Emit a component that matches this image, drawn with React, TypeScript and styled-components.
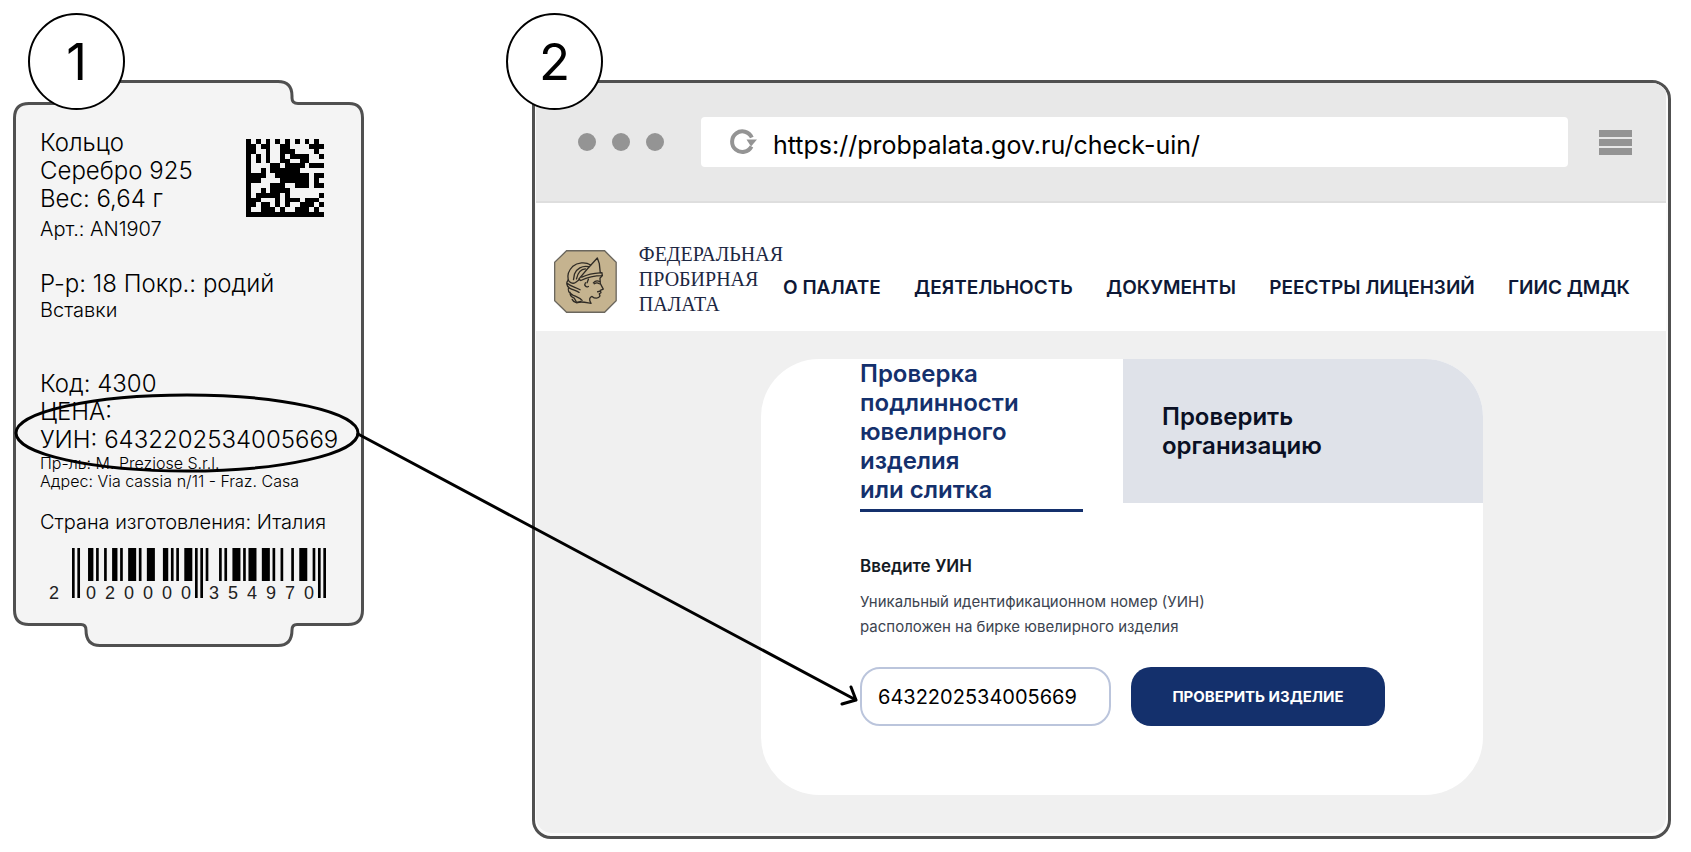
import React from 'react';
import styled, { createGlobalStyle } from 'styled-components';

const GlobalStyle = createGlobalStyle`
  *, *::before, *::after { box-sizing: border-box; }
  body { margin: 0; background: #ffffff; }
  p, h1, h2 { margin: 0; font-weight: inherit; font-size: inherit; }
`;

const outline = '#505050';
const navy = '#14306c';
const sans = "Inter, 'Liberation Sans', sans-serif";

const Page = styled.main`
  position: relative;
  display: flex;
  align-items: flex-start;
  min-width: 1500px;
  padding: 80px 20px 13px 13px;
  font-family: ${sans};
  color: #000000;
`;

const Step = styled.section`
  position: relative;
  min-width: 0;
`;

const TagStep = styled(Step)`
  flex: none;
  width: 351px;
  margin-right: 168px;
`;

const SiteStep = styled(Step)`
  flex: 1;
`;

const StepNumber = styled.div<{ $left: number }>`
  position: absolute;
  z-index: 1;
  top: -67px;
  left: ${({ $left }) => $left}px;
  display: flex;
  align-items: center;
  justify-content: center;
  width: 97px;
  height: 97px;
  border: 2px solid #000000;
  border-radius: 50%;
  background: #ffffff;
  font-size: 51px;
  line-height: 60px;
`;

/* Jewellery tag */

const TagShape = styled.svg`
  position: absolute;
  top: 0;
  left: 0;
`;

const TagBody = styled.div`
  position: relative;
  display: flex;
  flex-direction: column;
  padding: 49px 20px 48px 27px;
  font-weight: 350;
`;

const TagTop = styled.div`
  display: flex;
  justify-content: space-between;
  padding-right: 20px;
`;

const MatrixCode = styled.svg`
  flex: none;
  margin-top: 10px;
`;

const TagGroup = styled.div<{ $gap?: number }>`
  margin-top: ${({ $gap = 0 }) => $gap}px;
  white-space: nowrap;
`;

const Line = styled.p`
  font-size: 24px;
  line-height: 28px;
`;

const MidLine = styled.p`
  font-size: 20px;
  line-height: 24px;
`;

const SmallLine = styled.p`
  font-size: 16px;
  line-height: 18px;
`;

const Article = styled(MidLine)`
  margin-top: 4px;
`;

const BarcodeSvg = styled.svg`
  display: block;
  margin-top: 14px;
`;

/* Browser window */

const Window = styled.div`
  display: flex;
  flex-direction: column;
  overflow: hidden;
  padding: 0 2px 3px 1px;
  border: 3px solid ${outline};
  border-radius: 19px;
  background: #fbfbfb;
`;

const Chrome = styled.div`
  display: flex;
  align-items: center;
  height: 120px;
  padding: 0 34px 0 42px;
  border-bottom: 2px solid #dedede;
  background: #e8e8e8;
`;

const Dots = styled.div`
  display: flex;
  gap: 16px;
  margin-right: 37px;
`;

const Dot = styled.span`
  width: 18px;
  height: 18px;
  border-radius: 50%;
  background: #949494;
`;

const AddressBar = styled.label`
  display: flex;
  flex: 1;
  align-items: center;
  height: 50px;
  padding: 0 28px;
  border-radius: 4px;
  background: #ffffff;
`;

const Address = styled.input`
  flex: 1;
  min-width: 0;
  height: 32px;
  margin: 5px 0 0 14px;
  padding: 0;
  border: 0;
  outline: 0;
  background: none;
  font: 25px ${sans};
  color: #000000;
`;

const MenuButton = styled.button`
  display: flex;
  flex-direction: column;
  gap: 2px;
  margin-left: 31px;
  padding: 0;
  border: 0;
  background: none;
`;

const MenuBar = styled.span`
  width: 33px;
  height: 7px;
  background: #949494;
`;

const SiteHeader = styled.header`
  display: flex;
  align-items: center;
  height: 128px;
  padding: 28px 36px 0 18px;
  background: #ffffff;
`;

const Brand = styled.a`
  display: flex;
  flex: none;
  align-items: center;
  gap: 22px;
  width: 229px;
  color: #1c2742;
  font: 20px/25px 'Liberation Serif', serif;
  text-decoration: none;
  white-space: nowrap;
`;

const BrandName = styled.span`
  padding-bottom: 4px;
`;

const Nav = styled.nav`
  display: flex;
  flex: 1;
  justify-content: space-between;
  padding-top: 13px;
`;

const NavLink = styled.a`
  color: #0d1836;
  font-size: 19px;
  font-weight: 600;
  line-height: 24px;
  text-decoration: none;
  white-space: nowrap;
`;

const SiteBody = styled.div`
  padding: 28px 183px 38px 225px;
  border-radius: 0 0 16px 16px;
  background: #f0f0f0;
`;

const Card = styled.div`
  overflow: hidden;
  padding-bottom: 69px;
  border-radius: 58px;
  background: #ffffff;
`;

const Tabs = styled.div`
  display: flex;
  align-items: flex-start;
  justify-content: space-between;
  padding-left: 99px;
`;

const Tab = styled.button`
  border: 0;
  font: 600 24px/29px ${sans};
  text-align: left;
`;

const ActiveTab = styled(Tab)`
  width: 223px;
  height: 153px;
  padding: 0 40px 5px 0;
  border-bottom: 3px solid ${navy};
  background: none;
  color: ${navy};
`;

const OtherTab = styled(Tab)`
  width: 360px;
  height: 144px;
  padding: 0 39px;
  background: #dfe2e9;
  color: #0a1024;
`;

const Form = styled.form`
  padding: 41px 98px 0 99px;
`;

const FieldLabel = styled.label`
  display: block;
  font-size: 17px;
  font-weight: 600;
  line-height: 26px;
  color: #141a24;
`;

const Hint = styled.p`
  margin-top: 10px;
  font-size: 15px;
  line-height: 25px;
  color: #3c4450;
`;

const Controls = styled.div`
  display: flex;
  gap: 20px;
  margin-top: 28px;
`;

const UinInput = styled.input`
  width: 251px;
  height: 59px;
  padding: 0 16px;
  border: 2px solid #bbc5dc;
  border-radius: 20px;
  outline: 0;
  background: #ffffff;
  font: 20px ${sans};
  color: #000000;
`;

const Submit = styled.button`
  width: 254px;
  height: 59px;
  padding: 0;
  border: 0;
  border-radius: 20px;
  background: ${navy};
  color: #ffffff;
  font: 700 15px ${sans};
`;

const Pointer = styled.svg`
  position: absolute;
  z-index: 2;
  top: 0;
  left: 0;
  pointer-events: none;
`;

const matrixRows = [
  '1010101010101010',
  '1101100110000111',
  '1100100111000010',
  '1010100101111001',
  '1010100110011000',
  '1000011011110111',
  '1001011111100000',
  '1111001111111011',
  '1110000111111010',
  '1000011100111011',
  '1001011110000000',
  '1011111010000001',
  '1110001011101110',
  '1101101010011101',
  '1001110100111010',
  '1111111111111111',
];

function DataMatrix() {
  return (
    <MatrixCode width="78" height="78" viewBox="0 0 16 16" shapeRendering="crispEdges">
      {matrixRows.map((row, y) =>
        row.split('').map((cell, x) =>
          cell === '1' ? <rect key={`${x}-${y}`} x={x} y={y} width="1" height="1" /> : null,
        ),
      )}
    </MatrixCode>
  );
}

const leftOdd = [
  '0001101', '0011001', '0010011', '0111101', '0100011',
  '0110001', '0101111', '0111011', '0110111', '0001011',
];
const invert = (s: string) => s.replace(/./g, (c) => (c === '1' ? '0' : '1'));
const reverse = (s: string) => s.split('').reverse().join('');
const leftParity = 'LLGGLG';

/* EAN-13 with a leading digit 2 */
function Barcode({ code }: { code: string }) {
  const digits = code.slice(1).split('').map(Number);
  const left = digits
    .slice(0, 6)
    .map((d, i) => (leftParity[i] === 'L' ? leftOdd[d] : reverse(invert(leftOdd[d]))))
    .join('');
  const right = digits.slice(6).map((d) => invert(leftOdd[d])).join('');
  const bits = `101${left}01010${right}101`;
  const unit = 254 / 95;
  const start = 32;
  const isGuard = (i: number) => i < 3 || (i > 44 && i < 50) || i > 91;
  const bars = Array.from(bits.matchAll(/1+/g), (m) => ({ at: m.index ?? 0, size: m[0].length }));
  return (
    <BarcodeSvg width="290" height="54" viewBox="0 0 290 54">
      {bars.map(({ at, size }) => (
        <rect key={at} x={start + at * unit} y="0" width={size * unit} height={isGuard(at) ? 50 : 33} />
      ))}
      <g fontFamily="'Liberation Sans', sans-serif" fontSize="18" fontWeight="400" textAnchor="middle" fill="#222222">
        <text x="14" y="51">{code[0]}</text>
        {digits.map((d, i) => (
          <text key={i} x={i < 6 ? 51 + i * 19 : 174 + (i - 6) * 19} y="51">{d}</text>
        ))}
      </g>
    </BarcodeSvg>
  );
}

function Reload() {
  return (
    <svg width="30" height="28" viewBox="0 0 30 28" aria-hidden="true">
      <path d="M22.5 18.5A10.3 10.3 0 1 1 22.8 9.5" fill="none" stroke="#949494" strokeWidth="4" />
      <path d="M17.5 11.5H28L22 18.5Z" fill="#949494" />
    </svg>
  );
}

function Emblem() {
  return (
    <svg width="65" height="65" viewBox="41 29 190 190" aria-hidden="true">
      <path d="M79 31H194L229 66V182L194 217H79L43 182V66Z" fill="#c5b38f" stroke="#6b675e" strokeWidth="4" />
      <g fill="none" stroke="#2f2b25" strokeWidth="4" strokeLinecap="round" strokeLinejoin="round">
        <path d="M116 117C133 96 152 74 172 53L178 70L181 98L186 97L187 106C165 106 142 111 122 121Z" />
        <path d="M125 111C142 103 160 99 180 98" />
        <path d="M152 74C136 64 112 66 97 79C85 91 81 106 84 119C87 128 98 132 106 127L118 118" />
        <path d="M145 79C126 75 109 86 103 101L100 118M136 86C121 87 113 98 109 116" />
        <path d="M84 119C77 128 79 137 88 144C98 150 110 151 117 157M82 130C92 139 109 142 120 149M86 142C80 151 87 159 98 165C108 170 118 173 126 181M90 157C88 165 94 171 102 174L108 185" />
        <path d="M96 178C100 187 112 191 122 184" />
        <path d="M187 106L180 114L181 130L190 147L181 151L183 158L178 161L180 168C176 176 164 176 156 169C148 172 146 179 153 190M108 188C124 183 136 187 153 190" />
        <path d="M160 128C166 121 173 121 179 124M163 131C169 127 174 128 178 131M145 117L141 128M136 128C131 135 138 143 145 139M173 155L181 153" />
      </g>
    </svg>
  );
}

const navItems = ['О ПАЛАТЕ', 'ДЕЯТЕЛЬНОСТЬ', 'ДОКУМЕНТЫ', 'РЕЕСТРЫ ЛИЦЕНЗИЙ', 'ГИИС ДМДК'];

export default function App() {
  return (
    <>
      <GlobalStyle />
      <Page>
        <TagStep>
          <StepNumber $left={15}>1</StepNumber>
          <TagShape width="351" height="567" viewBox="0 0 351 567" aria-hidden="true">
            <path
              d="M72 18Q72 1.5 86 1.5H265Q279 1.5 279 16V18Q279 23.5 285 23.5H336Q349.5 23.5 349.5 38V530Q349.5 544.5 335 544.5H284Q279 544.5 279 550Q279 565.5 265 565.5H87Q73 565.5 73 550Q73 544.5 68 544.5H16Q1.5 544.5 1.5 530V38Q1.5 23.5 16 23.5H66Q72 23.5 72 18Z"
              fill="#f4f4f4"
              stroke={outline}
              strokeWidth="3"
            />
          </TagShape>
          <TagBody>
            <TagTop>
              <TagGroup>
                <Line>Кольцо</Line>
                <Line>Серебро 925</Line>
                <Line>Вес: 6,64 г</Line>
                <Article>Арт.: AN1907</Article>
              </TagGroup>
              <DataMatrix />
            </TagTop>
            <TagGroup $gap={29}>
              <Line>Р-р: 18 Покр.: родий</Line>
              <MidLine>Вставки</MidLine>
            </TagGroup>
            <TagGroup $gap={48}>
              <Line>Код: 4300</Line>
              <Line>ЦЕНА:</Line>
              <Line>УИН: 6432202534005669</Line>
              <SmallLine>Пр-ль: M. Preziose S.r.l.</SmallLine>
              <SmallLine>Адрес: Via cassia n/11 - Fraz. Casa</SmallLine>
            </TagGroup>
            <TagGroup $gap={20}>
              <MidLine>Страна изготовления: Италия</MidLine>
            </TagGroup>
            <Barcode code="2020000354970" />
          </TagBody>
        </TagStep>

        <SiteStep>
          <StepNumber $left={-26}>2</StepNumber>
          <Window>
            <Chrome>
              <Dots>
                <Dot />
                <Dot />
                <Dot />
              </Dots>
              <AddressBar>
                <Reload />
                <Address aria-label="Адрес" type="text" defaultValue="https://probpalata.gov.ru/check-uin/" />
              </AddressBar>
              <MenuButton type="button" aria-label="Меню">
                <MenuBar />
                <MenuBar />
                <MenuBar />
              </MenuButton>
            </Chrome>
            <SiteHeader>
              <Brand href="#">
                <Emblem />
                <BrandName>
                  ФЕДЕРАЛЬНАЯ
                  <br />
                  ПРОБИРНАЯ
                  <br />
                  ПАЛАТА
                </BrandName>
              </Brand>
              <Nav>
                {navItems.map((item) => (
                  <NavLink key={item} href="#">{item}</NavLink>
                ))}
              </Nav>
            </SiteHeader>
            <SiteBody>
              <Card>
                <Tabs>
                  <ActiveTab type="button">
                    Проверка подлинности ювелирного изделия
                    <br />
                    или слитка
                  </ActiveTab>
                  <OtherTab type="button">
                    Проверить
                    <br />
                    организацию
                  </OtherTab>
                </Tabs>
                <Form onSubmit={(event) => event.preventDefault()}>
                  <FieldLabel htmlFor="uin">Введите УИН</FieldLabel>
                  <Hint>
                    Уникальный идентификационном номер (УИН)
                    <br />
                    расположен на бирке ювелирного изделия
                  </Hint>
                  <Controls>
                    <UinInput id="uin" type="text" defaultValue="6432202534005669" />
                    <Submit type="submit">ПРОВЕРИТЬ ИЗДЕЛИЕ</Submit>
                  </Controls>
                </Form>
              </Card>
            </SiteBody>
          </Window>
        </SiteStep>

        <Pointer width="870" height="720" viewBox="0 0 870 720" aria-hidden="true">
          <g fill="none" stroke="#000000" strokeWidth="3" strokeLinecap="round" strokeLinejoin="round">
            <ellipse cx="187" cy="433" rx="171" ry="38" />
            <path d="M358 434L856 700M851 687L856 700L842 704" />
          </g>
        </Pointer>
      </Page>
    </>
  );
}
